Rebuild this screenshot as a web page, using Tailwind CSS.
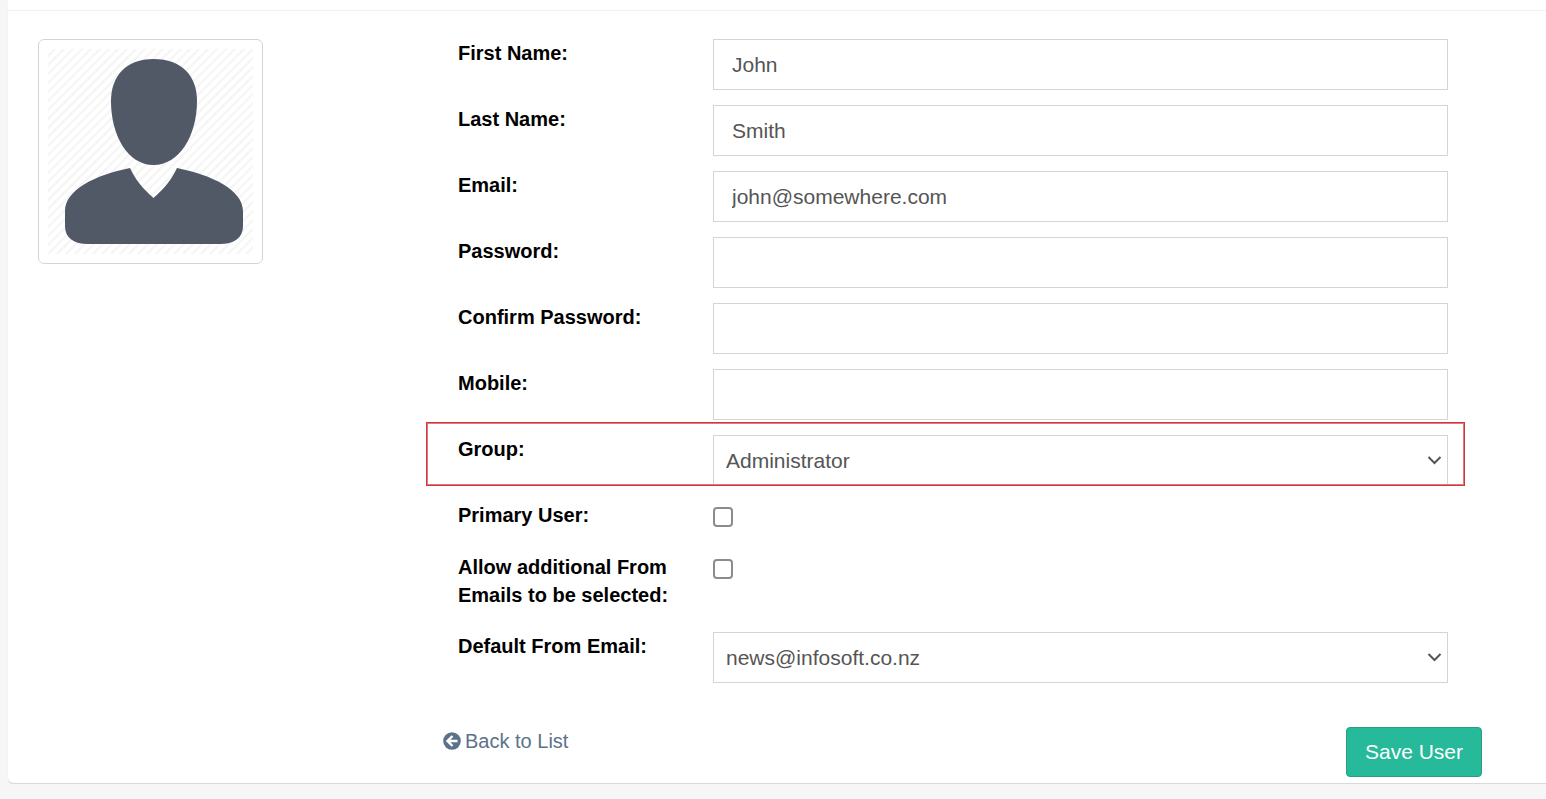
<!DOCTYPE html>
<html lang="en">
<head>
  <meta charset="UTF-8" />
  <meta name="viewport" content="width=device-width, initial-scale=1.0"/>
  <title>Edit User</title>
  <script src="https://cdn.jsdelivr.net/npm/@tailwindcss/browser@4"></script>
</head>
<body class="bg-[#f6f6f6] font-['Liberation_Sans',Arial,sans-serif] text-xl leading-7 text-black">

  <!-- Panel -->
  <main class="ml-2 bg-white rounded-bl-md border-b border-[#d9d9d9] shadow-[0_1px_1px_#e6e6e6]">
    <div class="h-[11px] border-b border-[#f1f1f1]"></div>

    <div class="flex pt-7 pb-1.5 pl-[30px] pr-16">
      <!-- Avatar -->
      <div class="w-[405px] shrink-0">
        <div class="size-[225px] p-2 rounded-md border border-[#d2d6d9]">
          <svg class="w-full h-full" viewBox="0 0 207 207" role="img" aria-label="User photo">
            <defs>
              <pattern id="hatch" width="9" height="9" patternUnits="userSpaceOnUse">
                <path d="M-2 2 L2 -2 M-1 10 L10 -1 M7 11 L11 7" stroke="#f6f6f6" stroke-width="2.5"/>
              </pattern>
            </defs>
            <rect x="1" y="1" width="205" height="205" fill="url(#hatch)"/>
            <path fill="#515866" d="M106.500 11 C135 11 150 28 150 53 C150 88 132 117 106.500 117 C81 117 64 88 64 53 C64 28 79 11 106.500 11 Z"/>
            <path fill="#515866" d="M83 120 C88 131 96 141 106.500 150 C117 141 125 131 130 120 C165 127 196 142 196 163 V178 C196 190 187 196 173 196 H41 C27 196 18 190 18 178 V163 C18 142 48 127 83 120 Z"/>
          </svg>
        </div>
      </div>

      <!-- User Form -->
      <form id="userForm" class="flex-1">
        <div class="flex flex-col gap-[15px] pl-[15px] pr-[34px]">
          <div class="flex">
            <label for="firstName" class="w-[255px] shrink-0 pr-8 font-bold">First Name:</label>
            <input type="text" id="firstName" name="firstName" value="John" class="flex-1 h-[51px] px-[18px] border border-[#d2d6d9] text-[21px] text-[#555]"/>
          </div>
          <div class="flex">
            <label for="lastName" class="w-[255px] shrink-0 pr-8 font-bold">Last Name:</label>
            <input type="text" id="lastName" name="lastName" value="Smith" class="flex-1 h-[51px] px-[18px] border border-[#d2d6d9] text-[21px] text-[#555]"/>
          </div>
          <div class="flex">
            <label for="email" class="w-[255px] shrink-0 pr-8 font-bold">Email:</label>
            <input type="email" id="email" name="email" value="john@somewhere.com" class="flex-1 h-[51px] px-[18px] border border-[#d2d6d9] text-[21px] text-[#555]"/>
          </div>
          <div class="flex">
            <label for="password" class="w-[255px] shrink-0 pr-8 font-bold">Password:</label>
            <input type="password" id="password" name="password" class="flex-1 h-[51px] px-[18px] border border-[#d2d6d9] text-[21px] text-[#555]"/>
          </div>
          <div class="flex">
            <label for="confirmPassword" class="w-[255px] shrink-0 pr-8 font-bold">Confirm Password:</label>
            <input type="password" id="confirmPassword" name="confirmPassword" class="flex-1 h-[51px] px-[18px] border border-[#d2d6d9] text-[21px] text-[#555]"/>
          </div>
          <div class="flex">
            <label for="mobile" class="w-[255px] shrink-0 pr-8 font-bold">Mobile:</label>
            <input type="tel" id="mobile" name="mobile" class="flex-1 h-[51px] px-[18px] border border-[#d2d6d9] text-[21px] text-[#555]"/>
          </div>

          <!-- Group (highlighted) -->
          <div class="relative flex">
            <label for="group" class="w-[255px] shrink-0 pr-8 font-bold">Group:</label>
            <div class="relative flex-1">
              <select id="group" name="group" class="block w-full h-[51px] pl-3 pr-10 border border-[#d2d6d9] bg-white appearance-none text-[21px] text-[#555]">
                <option>Administrator</option>
              </select>
              <svg class="absolute right-1.5 top-5 w-[15px] h-[10px] pointer-events-none" viewBox="0 0 15 10" fill="none" stroke="#555" stroke-width="2"><path d="M1.500 2 L7.500 8 L13.500 2"/></svg>
            </div>
            <div class="absolute -top-[13px] bottom-0 -left-8 -right-[17px] border border-[#c9383c] shadow-[inset_0_0_0_1px_#e07a7c] pointer-events-none"></div>
          </div>

          <div class="flex min-h-[37px]">
            <label for="primaryUser" class="w-[255px] shrink-0 pr-8 font-bold">Primary User:</label>
            <input type="checkbox" id="primaryUser" name="primaryUser" class="size-5 mt-1.5 appearance-none rounded border-2 border-[#8c8c8c] bg-white checked:bg-[#26b99a]"/>
          </div>
          <div class="flex pb-2">
            <label for="allowEmails" class="w-[255px] shrink-0 pr-8 font-bold">Allow additional From Emails to be selected:</label>
            <input type="checkbox" id="allowEmails" name="allowEmails" class="size-5 mt-1.5 appearance-none rounded border-2 border-[#8c8c8c] bg-white checked:bg-[#26b99a]"/>
          </div>

          <div class="flex">
            <label for="defaultEmail" class="w-[255px] shrink-0 pr-8 font-bold">Default From Email:</label>
            <div class="relative flex-1">
              <select id="defaultEmail" name="defaultEmail" class="block w-full h-[51px] pl-3 pr-10 border border-[#d2d6d9] bg-white appearance-none text-[21px] text-[#555]">
                <option>news@infosoft.co.nz</option>
              </select>
              <svg class="absolute right-1.5 top-5 w-[15px] h-[10px] pointer-events-none" viewBox="0 0 15 10" fill="none" stroke="#555" stroke-width="2"><path d="M1.500 2 L7.500 8 L13.500 2"/></svg>
            </div>
          </div>
        </div>

        <!-- Actions -->
        <div class="flex items-start justify-between mt-11">
          <a href="#" class="flex items-center gap-1 text-[#5b728a]">
            <svg class="size-[18px]" viewBox="0 0 18 18"><circle cx="9" cy="9" r="8.800" fill="#5b728a"/><path d="M14.500 9 H5 M9.500 4 L4.500 9 L9.500 14" fill="none" stroke="#fff" stroke-width="2.400"/></svg>
            Back to List
          </a>
          <button type="submit" class="h-[50px] px-[18px] rounded border border-[#2a9d80] bg-[#26b99a] text-[21px] text-white">Save User</button>
        </div>
      </form>
    </div>
  </main>

</body>
</html>
